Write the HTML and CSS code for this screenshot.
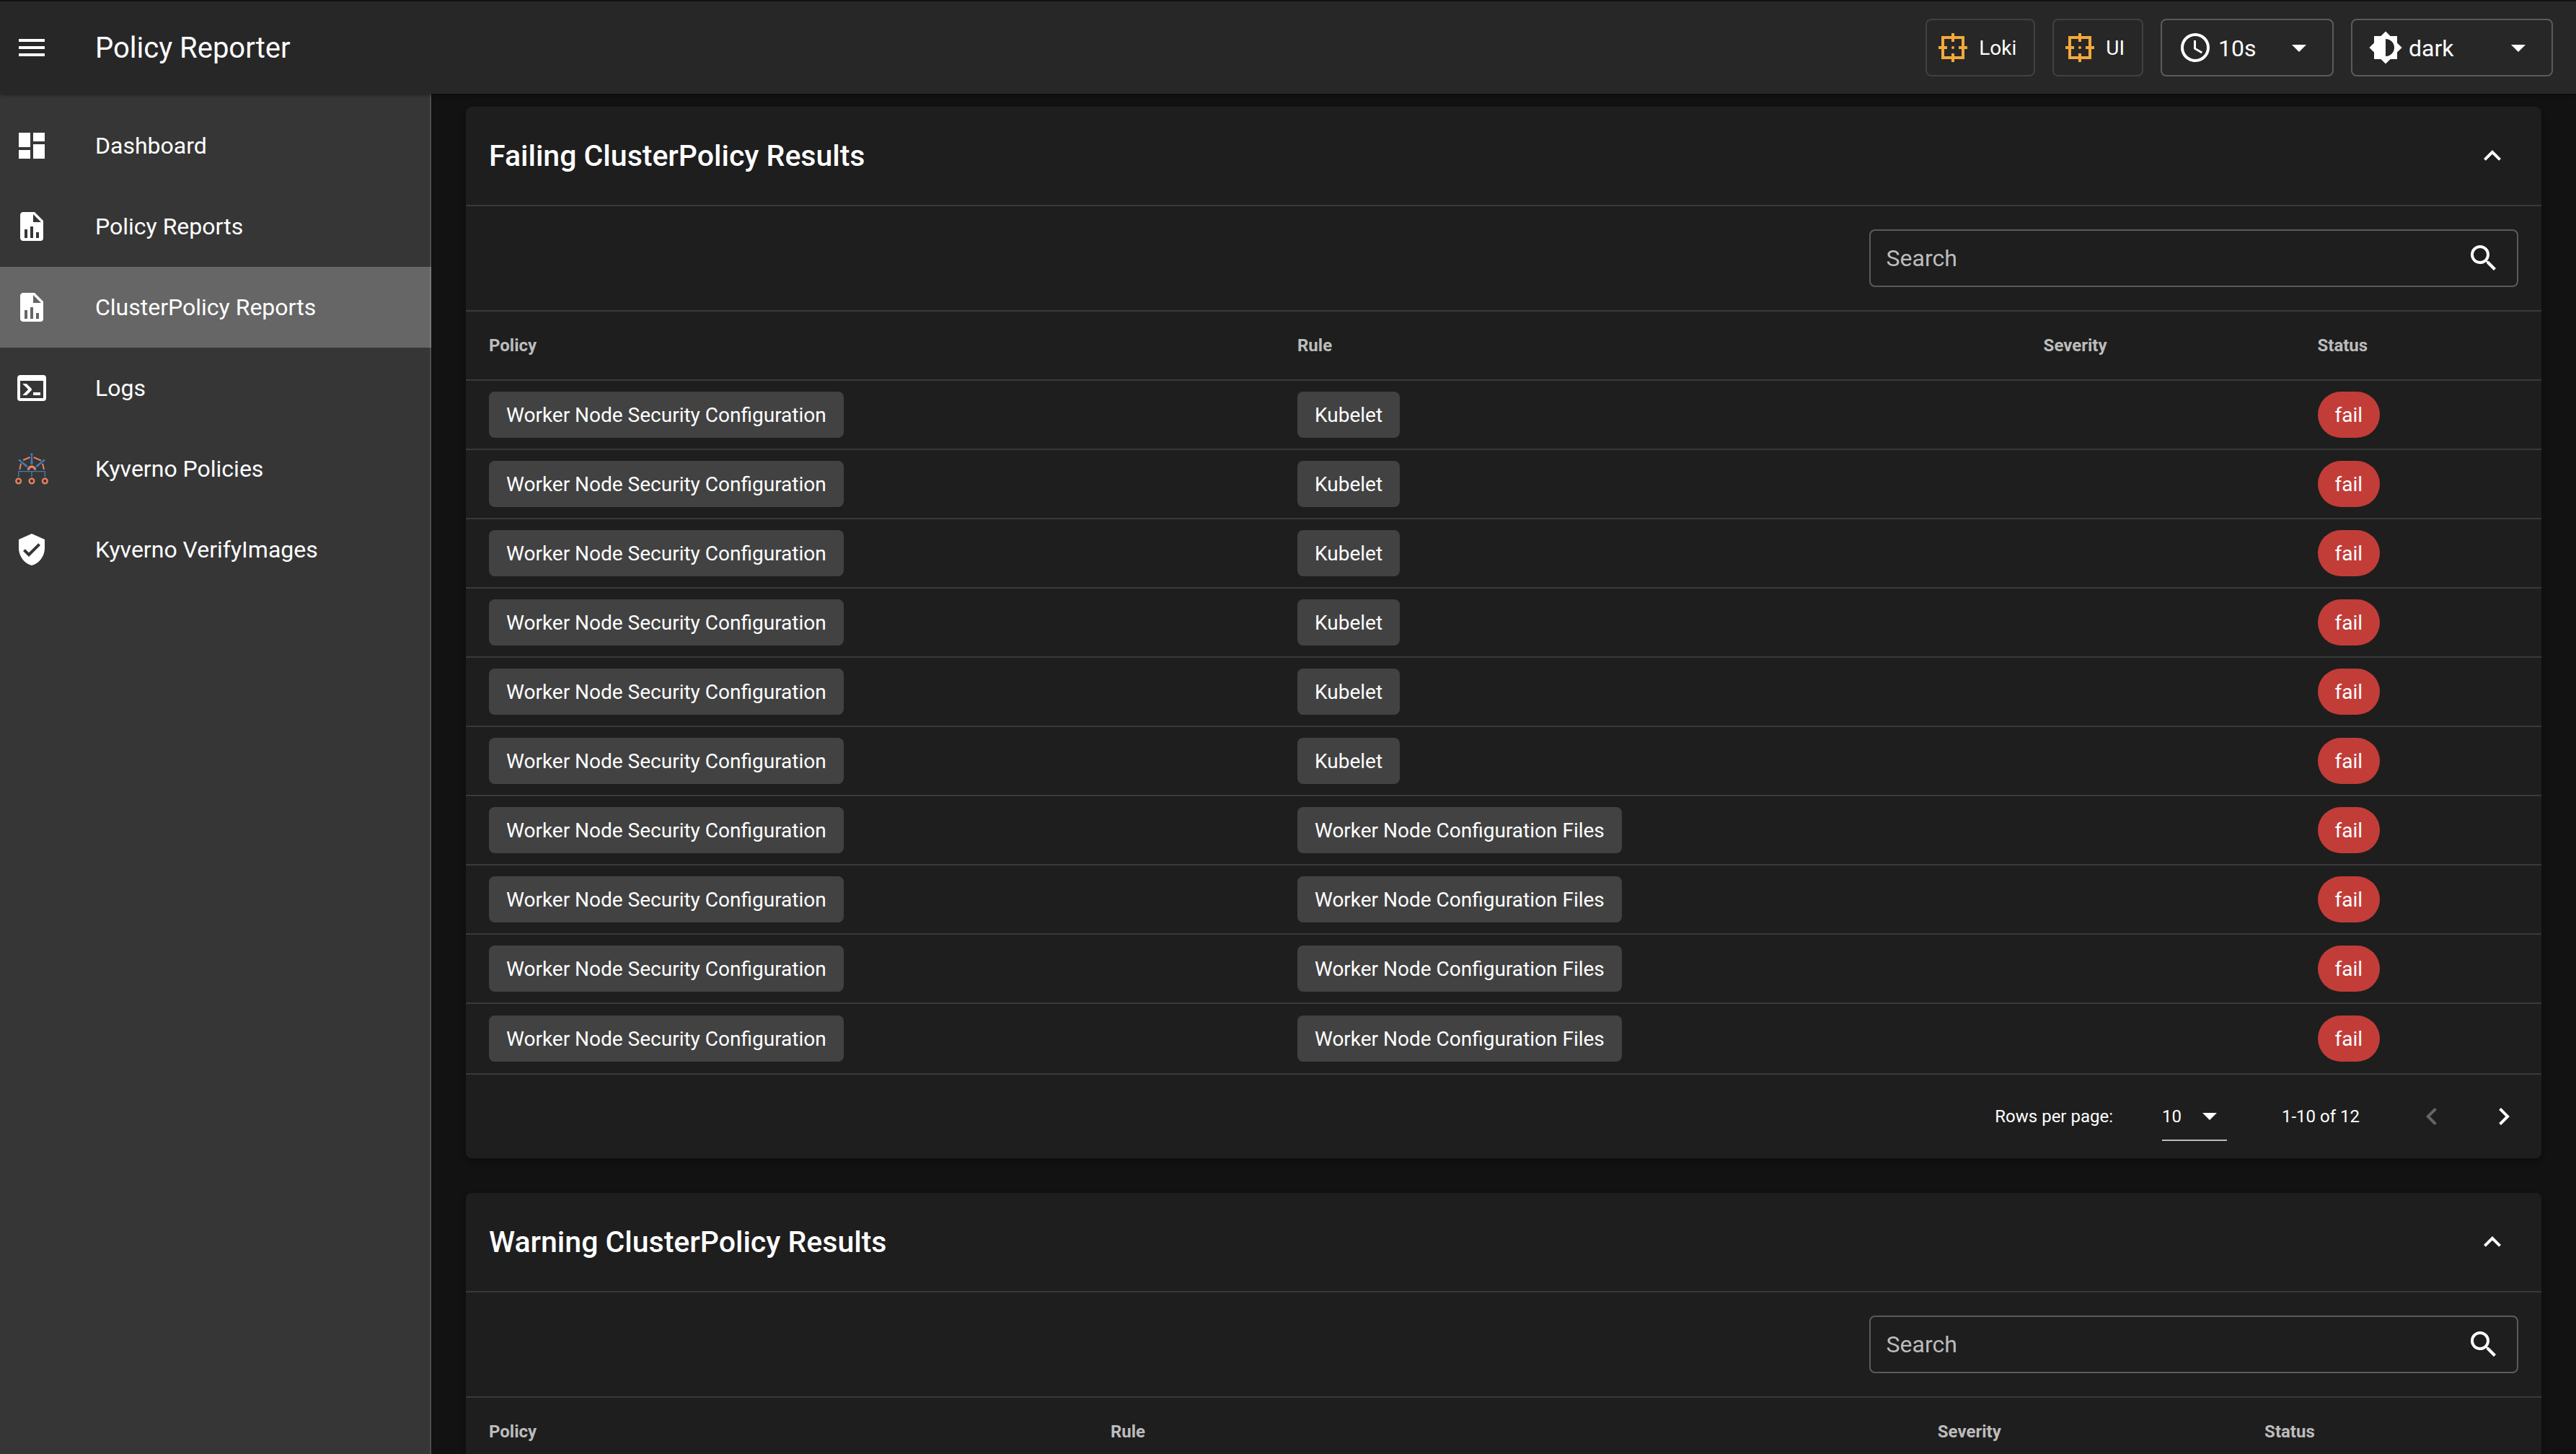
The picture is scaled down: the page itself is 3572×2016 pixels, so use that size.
FILE: index.html
```html
<!DOCTYPE html>
<html lang="en">
<head>
<meta charset="utf-8">
<title>Policy Reporter</title>
<meta name="viewport" content="width=device-width, initial-scale=1">
<link rel="stylesheet" href="styles.css">
</head>
<body>
<svg class="sprite" aria-hidden="true">
  <symbol id="i-target" viewBox="0 0 24 24"><path fill-rule="evenodd" d="M11,2H13V4H20V11H22V13H20V20H13V22H11V20H4V13H2V11H4V4H11ZM11,6H6V11H8V13H6V18H11V16H13V18H18V13H16V11H18V6H13V8H11Z"/><circle cx="12" cy="12" r="1"/></symbol>
  <symbol id="i-file" viewBox="0 0 24 24"><path d="M13,9H18.5L13,3.5V9M6,2H14L20,8V20A2,2 0 0,1 18,22H6C4.89,22 4,21.1 4,20V4C4,2.89 4.89,2 6,2M7,20H9V14H7V20M11,20H13V12H11V20M15,20H17V16H15V20Z"/></symbol>
  <symbol id="i-caret" viewBox="0 0 24 24"><path d="M7,10L12,15L17,10H7Z"/></symbol>
  <symbol id="i-up" viewBox="0 0 24 24"><path d="M7.41,15.41L12,10.83L16.59,15.41L18,14L12,8L6,14L7.41,15.41Z"/></symbol>
  <symbol id="i-search" viewBox="0 0 24 24"><path d="M9.5,3A6.5,6.5 0 0,1 16,9.5C16,11.11 15.41,12.59 14.44,13.73L14.71,14H15.5L20.5,19L19,20.5L14,15.5V14.71L13.73,14.44C12.59,15.41 11.11,16 9.5,16A6.5,6.5 0 0,1 3,9.5A6.5,6.5 0 0,1 9.5,3M9.5,5C7,5 5,7 5,9.5C5,12 7,14 9.5,14C12,14 14,12 14,9.5C14,7 12,5 9.5,5Z"/></symbol>
</svg>

<div class="app">
  <header class="topbar">
    <button class="menu-btn" type="button" aria-label="Toggle navigation"><svg class="icon" viewBox="0 0 24 24"><path d="M3,6H21V8H3V6M3,11H21V13H3V11M3,16H21V18H3V16Z"/></svg></button>
    <h1 class="brand">Policy Reporter</h1>
    <div class="tools">
      <button class="tool" type="button"><svg class="icon accent"><use href="#i-target"/></svg>Loki</button>
      <button class="tool" type="button"><svg class="icon accent"><use href="#i-target"/></svg>UI</button>
      <div class="picker picker-interval">
        <svg class="icon" viewBox="0 0 24 24"><path d="M12,20A8,8 0 0,0 20,12A8,8 0 0,0 12,4A8,8 0 0,0 4,12A8,8 0 0,0 12,20M12,2A10,10 0 0,1 22,12A10,10 0 0,1 12,22C6.47,22 2,17.5 2,12A10,10 0 0,1 12,2M12.5,7V12.25L17,14.92L16.25,16.15L11,13V7H12.5Z"/></svg>
        <select class="select" aria-label="Refresh interval"><option>10s</option></select>
        <svg class="icon"><use href="#i-caret"/></svg>
      </div>
      <div class="picker picker-theme">
        <svg class="icon" viewBox="0 0 24 24"><path d="M12,18V6A6,6 0 0,1 18,12A6,6 0 0,1 12,18M20,15.31L23.31,12L20,8.69V4H15.31L12,0.69L8.69,4H4V8.69L0.69,12L4,15.31V20H8.69L12,23.31L15.31,20H20V15.31Z"/></svg>
        <select class="select" aria-label="Theme"><option>dark</option></select>
        <svg class="icon"><use href="#i-caret"/></svg>
      </div>
    </div>
  </header>

  <nav class="drawer" aria-label="Main">
    <a class="nav-item" href="#dashboard"><svg class="icon" viewBox="0 0 24 24"><path d="M13,3V9H21V3M13,21H21V11H13M3,21H11V15H3M3,13H11V3H3V13Z"/></svg>Dashboard</a>
    <a class="nav-item" href="#policy-reports"><svg class="icon"><use href="#i-file"/></svg>Policy Reports</a>
    <a class="nav-item active" href="#cluster-policy-reports" aria-current="page"><svg class="icon"><use href="#i-file"/></svg>ClusterPolicy Reports</a>
    <a class="nav-item" href="#logs"><svg class="icon" viewBox="0 0 24 24"><path d="M20,19V7H4V19H20M20,3A2,2 0 0,1 22,5V19A2,2 0 0,1 20,21H4A2,2 0 0,1 2,19V5C2,3.89 2.9,3 4,3H20M13,17V15H18V17H13M9.58,13L5.57,9H8.4L11.7,12.3C12.09,12.69 12.09,13.33 11.7,13.72L8.42,17H5.59L9.58,13Z"/></svg>Logs</a>
    <a class="nav-item" href="#kyverno-policies"><svg class="icon kyverno" viewBox="60 48 144 144">
      <g fill="none" stroke="#e8825c" stroke-width="6"><path d="M96,84L125,72M140,72L171,86M87,98L82,123M177,98L183,123"/><path stroke-width="10" d="M118,125A14,14 0 0,1 146,125"/><g stroke-width="7"><circle cx="77" cy="171" r="10"/><circle cx="132" cy="171" r="10"/><circle cx="187" cy="171" r="10"/></g></g>
      <g fill="none" stroke="#3f7cc4" stroke-width="4"><path d="M77,154V131H187V154M132,131V154"/></g>
      <g fill="#3f7cc4"><circle cx="132" cy="60" r="5"/><circle cx="82" cy="85" r="5"/><circle cx="182" cy="85" r="5"/><path d="M130,60H134L137,98L134,103H130L127,98ZM83,83L110,103L117,113L107,112L80,87ZM181,83L154,103L147,113L157,112L184,87Z"/></g>
    </svg>Kyverno Policies</a>
    <a class="nav-item" href="#kyverno-verifyimages"><svg class="icon" viewBox="0 0 24 24"><path d="M10,17L6,13L7.41,11.59L10,14.17L16.59,7.58L18,9M12,1L3,5V11C3,16.55 6.84,21.74 12,23C17.16,21.74 21,16.55 21,11V5L12,1Z"/></svg>Kyverno VerifyImages</a>
  </nav>

  <main class="content">
    <section class="card">
      <div class="card-head">
        <h2 class="card-title">Failing ClusterPolicy Results</h2>
        <button class="icon-btn" type="button" aria-label="Collapse failing results"><svg class="icon"><use href="#i-up"/></svg></button>
      </div>
      <div class="card-search">
        <label class="search"><input class="search-input" type="text" placeholder="Search" aria-label="Search failing results"><svg class="icon"><use href="#i-search"/></svg></label>
      </div>
      <table class="results failing">
        <colgroup><col class="c-policy"><col class="c-rule"><col class="c-severity"><col class="c-status"></colgroup>
        <thead><tr><th>Policy</th><th>Rule</th><th>Severity</th><th>Status</th></tr></thead>
        <tbody>
          <tr><td><span class="chip">Worker Node Security Configuration</span></td><td><span class="chip">Kubelet</span></td><td></td><td><span class="chip fail">fail</span></td></tr>
          <tr><td><span class="chip">Worker Node Security Configuration</span></td><td><span class="chip">Kubelet</span></td><td></td><td><span class="chip fail">fail</span></td></tr>
          <tr><td><span class="chip">Worker Node Security Configuration</span></td><td><span class="chip">Kubelet</span></td><td></td><td><span class="chip fail">fail</span></td></tr>
          <tr><td><span class="chip">Worker Node Security Configuration</span></td><td><span class="chip">Kubelet</span></td><td></td><td><span class="chip fail">fail</span></td></tr>
          <tr><td><span class="chip">Worker Node Security Configuration</span></td><td><span class="chip">Kubelet</span></td><td></td><td><span class="chip fail">fail</span></td></tr>
          <tr><td><span class="chip">Worker Node Security Configuration</span></td><td><span class="chip">Kubelet</span></td><td></td><td><span class="chip fail">fail</span></td></tr>
          <tr><td><span class="chip">Worker Node Security Configuration</span></td><td><span class="chip">Worker Node Configuration Files</span></td><td></td><td><span class="chip fail">fail</span></td></tr>
          <tr><td><span class="chip">Worker Node Security Configuration</span></td><td><span class="chip">Worker Node Configuration Files</span></td><td></td><td><span class="chip fail">fail</span></td></tr>
          <tr><td><span class="chip">Worker Node Security Configuration</span></td><td><span class="chip">Worker Node Configuration Files</span></td><td></td><td><span class="chip fail">fail</span></td></tr>
          <tr><td><span class="chip">Worker Node Security Configuration</span></td><td><span class="chip">Worker Node Configuration Files</span></td><td></td><td><span class="chip fail">fail</span></td></tr>
        </tbody>
      </table>
      <div class="pager">
        <label for="rows">Rows per page:</label>
        <div class="rows-picker">
          <select class="select" id="rows"><option>10</option></select>
          <svg class="icon"><use href="#i-caret"/></svg>
        </div>
        <span class="range">1-10 of 12</span>
        <div class="pager-nav">
          <button class="icon-btn" type="button" aria-label="Previous page" disabled><svg class="icon" viewBox="0 0 24 24"><path d="M15.41,16.58L10.83,12L15.41,7.41L14,6L8,12L14,18L15.41,16.58Z"/></svg></button>
          <button class="icon-btn" type="button" aria-label="Next page"><svg class="icon" viewBox="0 0 24 24"><path d="M8.59,16.58L13.17,12L8.59,7.41L10,6L16,12L10,18L8.59,16.58Z"/></svg></button>
        </div>
      </div>
    </section>

    <section class="card">
      <div class="card-head">
        <h2 class="card-title">Warning ClusterPolicy Results</h2>
        <button class="icon-btn" type="button" aria-label="Collapse warning results"><svg class="icon"><use href="#i-up"/></svg></button>
      </div>
      <div class="card-search">
        <label class="search"><input class="search-input" type="text" placeholder="Search" aria-label="Search warning results"><svg class="icon"><use href="#i-search"/></svg></label>
      </div>
      <table class="results warning">
        <colgroup><col class="c-policy"><col class="c-rule"><col class="c-severity"><col class="c-status"></colgroup>
        <thead><tr><th>Policy</th><th>Rule</th><th>Severity</th><th>Status</th></tr></thead>
      </table>
    </section>
  </main>
</div>
</body>
</html>
```
FILE: styles.css
```css
:root {
  --line: #393939;
  --outline: #5b5b5b;
  --muted: #bcbcbc;
}

* { box-sizing: border-box; }

body {
  margin: 0;
  background: #121212;
  color: #fff;
  font-family: Roboto, "Liberation Sans", sans-serif;
  font-size: 32px;
}

button, input, select { font: inherit; color: inherit; }

button {
  padding: 0;
  border: 0;
  background: none;
  cursor: pointer;
}

.sprite { display: none; }

.icon {
  flex: none;
  display: block;
  width: 48px;
  height: 48px;
  fill: currentColor;
}

.kyverno { overflow: visible; }

.accent { color: #f2a93b; }

.app {
  display: grid;
  grid-template: auto minmax(0, 1fr) / 598px minmax(0, 1fr);
  height: 100vh;
}

/* Top bar */
.topbar {
  grid-column: 1 / -1;
  position: relative;
  z-index: 1;
  display: flex;
  align-items: center;
  gap: 64px;
  height: 130px;
  padding: 0 32px 0 20px;
  border-top: 2px solid #111;
  background: #272727;
  box-shadow: 0 2px 4px rgba(0, 0, 0, .4);
}

.brand {
  margin: 0;
  font-size: 40px;
  font-weight: 400;
}

.tools {
  display: flex;
  gap: 24px;
  margin-left: auto;
}

.tool, .picker {
  display: flex;
  align-items: center;
  height: 80px;
  border: 2px solid #404040;
  border-radius: 8px;
}

.tool {
  gap: 12px;
  padding: 0 24px 0 12px;
  font-size: 28px;
}

.picker {
  gap: 8px;
  padding: 0 22px;
  border-color: var(--outline);
}

.picker-interval { width: 240px; }
.picker-theme { width: 280px; }

.select {
  flex: 1;
  min-width: 0;
  padding: 2px 0 0;
  border: 0;
  outline: 0;
  appearance: none;
  background: none;
}

/* Navigation drawer */
.drawer {
  position: relative;
  padding-top: 16px;
  background: #363636;
}

.drawer::after {
  content: "";
  position: absolute;
  inset: 0 0 0 auto;
  width: 2px;
  background: rgba(255, 255, 255, .12);
}

.nav-item {
  display: flex;
  align-items: center;
  gap: 64px;
  height: 112px;
  padding: 0 20px;
  color: inherit;
  text-decoration: none;
}

.nav-item.active { background: #666; }

/* Cards */
.content {
  display: flex;
  flex-direction: column;
  gap: 48px;
  padding: 18px 48px 48px;
  overflow-y: auto;
  scrollbar-width: none;
}

.card {
  flex: none;
  border-radius: 8px;
  background: #1e1e1e;
  box-shadow: 0 4px 8px rgba(0, 0, 0, .3);
}

.card-head, .card-search {
  display: flex;
  align-items: center;
  padding: 32px;
  border-bottom: 2px solid var(--line);
}

.card-head { justify-content: space-between; }
.card-search { justify-content: flex-end; }

.card-title {
  margin: 0;
  font-size: 41px;
  font-weight: 500;
}

.icon-btn {
  display: grid;
  place-items: center;
  width: 72px;
  height: 72px;
}

.icon-btn:disabled { color: #666; }

.search {
  display: flex;
  align-items: center;
  width: 32%;
  height: 80px;
  padding: 0 22px;
  border: 2px solid var(--outline);
  border-radius: 8px;
}

.search-input {
  flex: 1;
  min-width: 0;
  padding: 0;
  border: 0;
  outline: 0;
  background: none;
}

.search-input::placeholder { color: var(--muted); opacity: 1; }

/* Result tables */
.results {
  width: 100%;
  table-layout: fixed;
  border-collapse: separate;
  border-spacing: 0;
}

.failing .c-policy { width: 38.95%; }
.failing .c-rule { width: 35.95%; }
.failing .c-severity { width: 13.2%; }
.warning .c-policy { width: 29.95%; }
.warning .c-rule { width: 39.85%; }
.warning .c-severity { width: 15.75%; }

.results th, .results td {
  height: 96px;
  padding: 0 32px;
  border-bottom: 2px solid var(--line);
  text-align: left;
  vertical-align: middle;
}

.results th {
  color: var(--muted);
  font-size: 24px;
  font-weight: 700;
}

.results tbody tr:last-child td { border-bottom: 0; }

.chip {
  display: flex;
  align-items: center;
  width: fit-content;
  height: 64px;
  padding: 0 24px;
  border-radius: 8px;
  background: #424242;
  font-size: 28px;
  white-space: nowrap;
}

.chip.fail {
  border-radius: 32px;
  background: #c23d38;
}

/* Pagination */
.pager {
  display: flex;
  align-items: center;
  justify-content: flex-end;
  height: 118px;
  padding-right: 16px;
  border-top: 2px solid var(--line);
  font-size: 24px;
}

.rows-picker {
  display: flex;
  align-items: center;
  width: 90px;
  height: 68px;
  margin: 0 76px 0 68px;
  border-bottom: 2px solid var(--muted);
}

.pager-nav {
  display: flex;
  gap: 28px;
  margin-left: 64px;
}
```
